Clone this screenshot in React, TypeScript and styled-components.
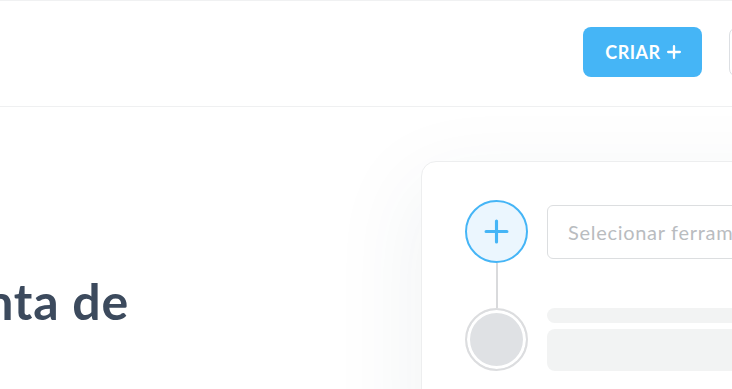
import React from 'react';
import styled, { createGlobalStyle } from 'styled-components';

const GlobalStyle = createGlobalStyle`
    html, body {
        margin: 0;
        padding: 0;
        background: #ffffff;
        overflow: hidden;
    }
    body {
        font-family: Lato, "Open Sans", sans-serif;
        width: 732px;
        height: 389px;
    }
`;

const Page = styled.div`
    width: 732px;
    height: 389px;
    overflow: hidden;
    border-top: 1px solid #f0f1f2;
    box-sizing: border-box;
`;

const Header = styled.header`
    height: 106px;
    border-bottom: 1px solid #eff0f1;
    display: flex;
    align-items: center;
    justify-content: flex-end;
    gap: 27px;
    padding-bottom: 4px;
    box-sizing: border-box;
    margin-right: -117px;
`;

const PrimaryButton = styled.button`
    height: 50px;
    width: 119px;
    border: none;
    border-radius: 8px;
    background: #45b5f6;
    color: #ffffff;
    font-family: inherit;
    font-weight: 700;
    font-size: 18px;
    letter-spacing: 0.5px;
    display: flex;
    align-items: center;
    justify-content: center;
    gap: 6px;
    padding: 0 0 0 1px;
`;

const GhostButton = styled.button`
    height: 50px;
    width: 120px;
    border: 1px solid #dcdfe3;
    border-radius: 8px;
    background: #ffffff;
`;

const Main = styled.main`
    display: flex;
    align-items: flex-start;
`;

const Hero = styled.div`
    width: 350px;
    padding-top: 169px;
    flex-shrink: 0;
    display: flex;
    justify-content: flex-end;
    margin-left: -221px;
`;

const Title = styled.h1`
    margin: 0;
    font-size: 50px;
    line-height: 1;
    font-weight: 700;
    color: #3c4a5d;
    white-space: nowrap;
    letter-spacing: 0.8px;
`;

const Card = styled.section`
    margin-left: 292px;
    margin-top: 54px;
    width: 420px;
    height: 300px;
    flex-shrink: 0;
    border: 1px solid #edeeef;
    border-radius: 15px;
    background: #ffffff;
    box-shadow: -10px 20px 90px rgba(40, 60, 90, 0.06);
    padding: 38px 0 0 43px;
    box-sizing: border-box;
    display: flex;
    flex-direction: column;
`;

const StepRow = styled.div`
    display: flex;
    gap: 19px;
    align-items: flex-start;
`;

const Rail = styled.div`
    display: flex;
    flex-direction: column;
    align-items: center;
    width: 63px;
    flex-shrink: 0;
`;

const Node = styled.div<{ $active?: boolean }>`
    width: 63px;
    height: 63px;
    border-radius: 50%;
    box-sizing: border-box;
    display: flex;
    align-items: center;
    justify-content: center;
    border: 2px solid ${p => (p.$active ? '#45b5f6' : '#dcdddf')};
    background: ${p => (p.$active ? '#ebf6fe' : '#dfe1e4')};
    box-shadow: ${p => (p.$active ? 'none' : 'inset 0 0 0 3px #ffffff')};
`;

const Connector = styled.div`
    width: 2px;
    height: 45px;
    background: #d9dadc;
`;

const Select = styled.div`
    margin-top: 5px;
    height: 54px;
    width: 300px;
    flex-shrink: 0;
    border: 1px solid #dcdee0;
    border-radius: 6px;
    box-sizing: border-box;
    display: flex;
    align-items: center;
    padding-left: 20px;
    font-size: 20px;
    letter-spacing: 0.7px;
    color: #b9bcbf;
    white-space: nowrap;
`;

const Skeleton = styled.div`
    display: flex;
    flex-direction: column;
    gap: 6px;
    width: 300px;
    flex-shrink: 0;
`;

const Bar = styled.div<{ $h: number }>`
    height: ${p => p.$h}px;
    border-radius: 8px;
    background: #f2f3f3;
`;

const Plus = ({ size, color, stroke }: { size: number; color: string; stroke: number }) => (
    <svg width={size} height={size} viewBox="0 0 24 24" fill="none">
        <path d="M12 2v20M2 12h20" stroke={color} strokeWidth={stroke} strokeLinecap="round" />
    </svg>
);

export default function App() {
    return (
        <Page>
            <GlobalStyle />
            <Header>
                <PrimaryButton>
                    CRIAR
                    <Plus size={14} color="#ffffff" stroke={4} />
                </PrimaryButton>
                <GhostButton />
            </Header>
            <Main>
                <Hero>
                    <Title>Ferramenta de</Title>
                </Hero>
                <Card>
                    <StepRow>
                        <Rail>
                            <Node $active>
                                <Plus size={25} color="#45b5f6" stroke={3} />
                            </Node>
                            <Connector />
                        </Rail>
                        <Select>Selecionar ferramenta</Select>
                    </StepRow>
                    <StepRow>
                        <Rail>
                            <Node />
                        </Rail>
                        <Skeleton>
                            <Bar $h={15} />
                            <Bar $h={42} />
                        </Skeleton>
                    </StepRow>
                </Card>
            </Main>
        </Page>
    );
}
